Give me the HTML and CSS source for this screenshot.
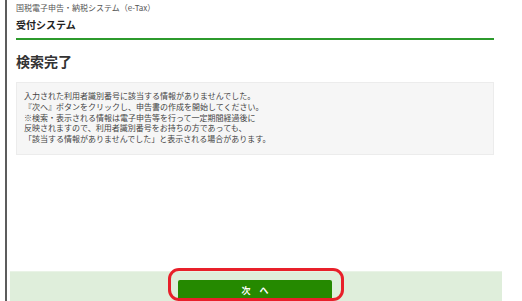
FILE: index.html
```html
<!DOCTYPE html>
<html lang="ja">
<head>
  <meta charset="UTF-8">
  <meta name="viewport" content="width=device-width, initial-scale=1.0">
  <title>受付システム</title>
  <link rel="stylesheet" href="styles.css">
</head>
<body>
  <div class="frame">
    <div class="page">
      <div class="header">
        <p class="site-name">国税電子申告・納税システム（e-Tax）</p>
        <p class="system-name">受付システム</p>
      </div>
      <div class="main">
        <h1>検索完了</h1>
        <div class="message">
          入力された利用者識別番号に該当する情報がありませんでした。<br>
          『次へ』ボタンをクリックし、申告書の作成を開始してください。<br>
          ※検索・表示される情報は電子申告等を行って一定期間経過後に<br>
          反映されますので、利用者識別番号をお持ちの方であっても、<br>
          「該当する情報がありませんでした」と表示される場合があります。
        </div>
      </div>
      <div class="footer">
        <div class="next-wrap">
          <button class="next-btn">次　へ</button>
          <span class="highlight"></span>
        </div>
      </div>
    </div>
  </div>
</body>
</html>
```

FILE: styles.css
```css
html, body {
  margin: 0;
  height: 100%;
  overflow: hidden;
}
body {
  font-family: "Noto Sans CJK JP", "Noto Sans", sans-serif;
  color: #333;
  background: #fff;
}
.frame {
  margin-left: 5px;
  border-left: 2px solid #5c5c5c;
  height: 301px;
  padding-left: 3px;
}
.page {
  width: 492px;
  height: 301px;
  display: flex;
  flex-direction: column;
}
.header {
  margin: 0 8px 0 6px;
  padding-top: 3px;
  border-bottom: 2px solid #2c9a2c;
}
.site-name {
  margin: 0;
  font-size: 8px;
  line-height: 10px;
  color: #555;
}
.system-name {
  margin: 5px 0 0;
  font-size: 10px;
  line-height: 14px;
  font-weight: bold;
  color: #222;
  padding-bottom: 6px;
}
.main {
  flex: 1;
  margin: 0 8px 0 6px;
}
h1 {
  margin: 12px 0 0;
  font-size: 14px;
  line-height: 18px;
  font-weight: bold;
  color: #333;
}
.message {
  margin-top: 12px;
  background: #f6f6f6;
  border: 1px solid #ececec;
  padding: 8px 7px 9px;
  font-size: 8px;
  line-height: 10.8px;
  color: #444;
}
.footer {
  height: 30px;
  background: #dfeedb;
  border-top: 1px solid #e9f3e6;
  box-sizing: border-box;
  display: flex;
  justify-content: center;
  padding-top: 8px;
  padding-right: 2px;
}
.next-wrap {
  position: relative;
  height: 22px;
}
.next-btn {
  display: block;
  width: 154px;
  height: 22px;
  border: none;
  border-radius: 2px;
  background: #258900;
  color: #fff;
  font-family: inherit;
  font-size: 9px;
  font-weight: bold;
  line-height: 20px;
  padding: 0;
}
.highlight {
  position: absolute;
  top: -12px;
  left: -10px;
  right: -12px;
  bottom: 1px;
  border: 3px solid #e8202a;
  border-radius: 11px;
}
```
